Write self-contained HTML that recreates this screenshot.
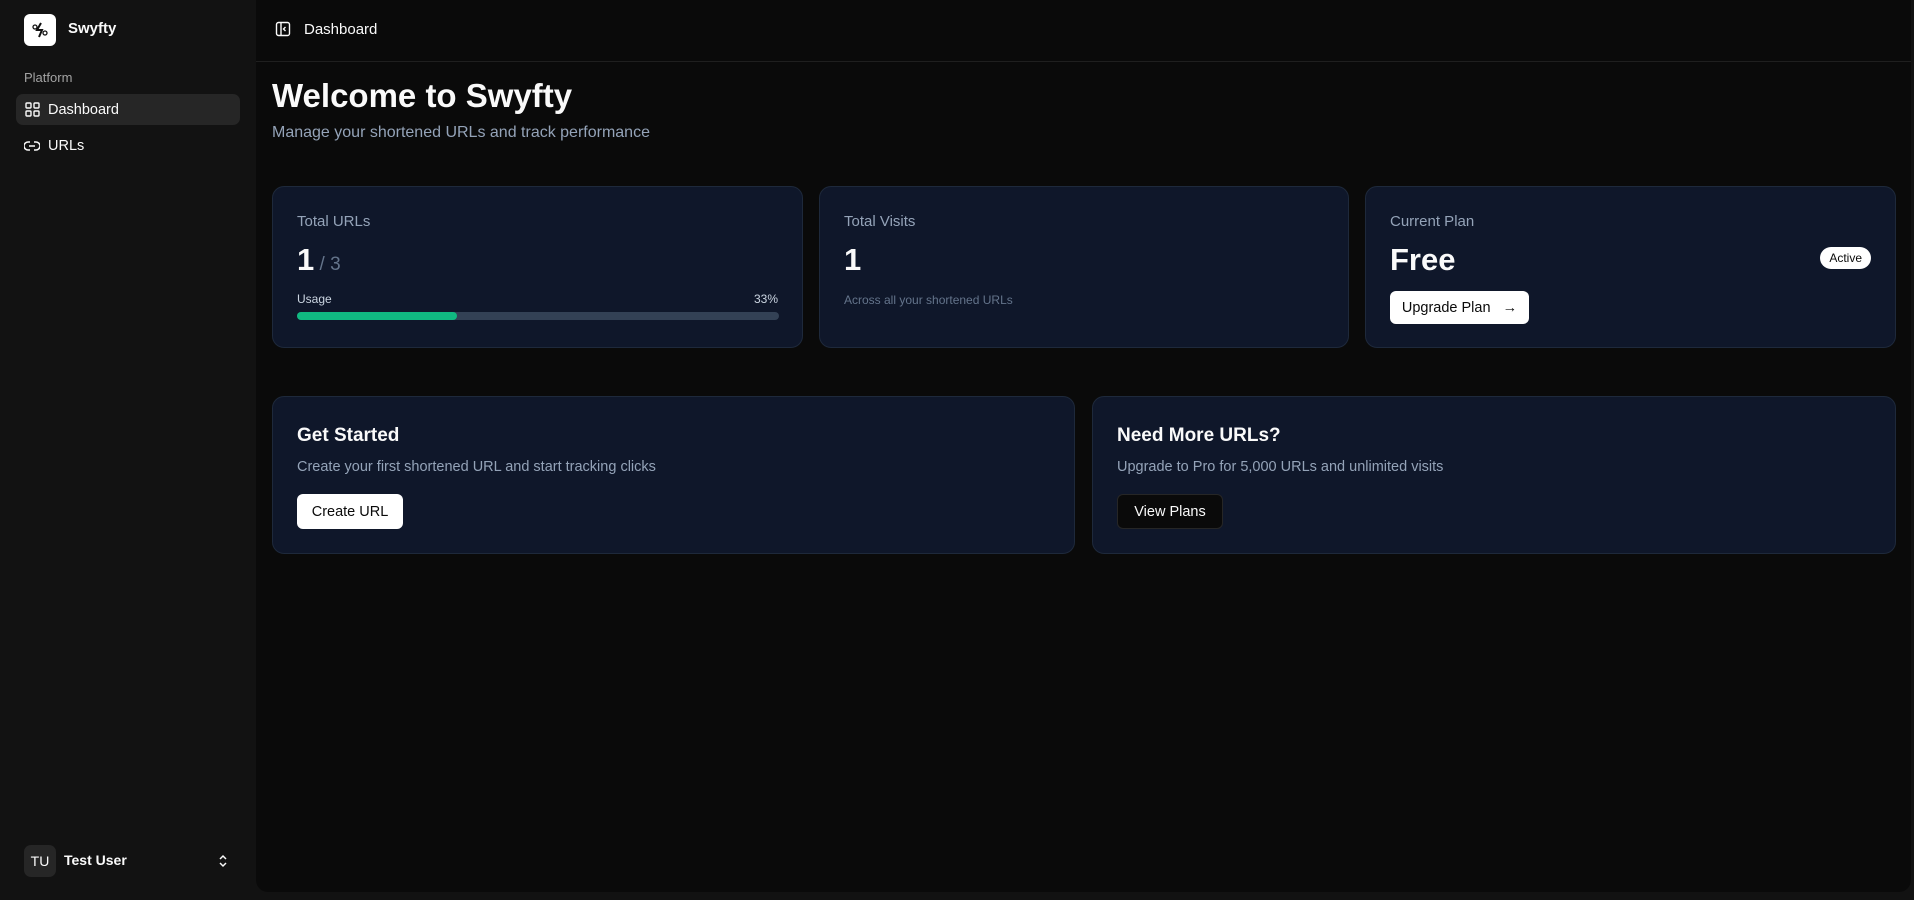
<!DOCTYPE html>
<html><head><meta charset="utf-8"><style>
*{box-sizing:border-box;margin:0;padding:0}
body{width:1914px;height:900px;background:#121212;font-family:"Liberation Sans",sans-serif;color:#fafafa;position:relative;overflow:hidden}
.abs{position:absolute}
.side{left:0;top:0;width:256px;height:900px;background:#121212}
.main{left:256px;top:0;width:1655px;height:892px;background:#0a0a0a;border-radius:0 0 12px 12px}
.card{position:absolute;background:#0f172a;border:1px solid #1e293b;border-radius:12px}
.lbl{color:#94a3b8;font-size:15px}
.btnw{position:absolute;background:#fff;color:#0a0a0a;border-radius:6px;font-size:15px;display:flex;align-items:center;justify-content:center}
</style></head><body>
<div class="abs side">
  <div class="abs" style="left:24px;top:14px;width:32px;height:32px;background:#fff;border-radius:6px">
    <svg width="32" height="32" viewBox="0 0 32 32"><circle cx="11" cy="13" r="2" fill="none" stroke="#111" stroke-width="1.3"/><circle cx="21" cy="19" r="2" fill="none" stroke="#111" stroke-width="1.3"/><path d="M17 9l-4 7h5l-3 7" fill="none" stroke="#111" stroke-width="2"/></svg>
  </div>
  <div class="abs" style="left:68px;top:20px;font-size:15px;font-weight:bold">Swyfty</div>
  <div class="abs" style="left:24px;top:70px;font-size:13px;color:#a3a3a3">Platform</div>
  <div class="abs" style="left:16px;top:94px;width:224px;height:31px;background:#262626;border-radius:7px"></div>
  <svg class="abs" style="left:25px;top:102px" width="15" height="15" viewBox="0 0 15 15" fill="none" stroke="#fafafa" stroke-width="1.4"><rect x="1" y="1" width="5" height="5" rx="1"/><rect x="9" y="1" width="5" height="5" rx="1"/><rect x="1" y="9" width="5" height="5" rx="1"/><rect x="9" y="9" width="5" height="5" rx="1"/></svg>
  <div class="abs" style="left:48px;top:102px;font-size:14.5px">Dashboard</div>
  <svg class="abs" style="left:24px;top:139px" width="16" height="14" viewBox="0 0 16 14" fill="none" stroke="#fafafa" stroke-width="1.5"><path d="M6 3H4a4 4 0 000 8h2M10 3h2a4 4 0 010 8h-2M5 7h6"/></svg>
  <div class="abs" style="left:48px;top:138px;font-size:14.5px">URLs</div>
  <div class="abs" style="left:24px;top:845px;width:32px;height:32px;background:#262626;border-radius:7px;font-size:14px;display:flex;align-items:center;justify-content:center">TU</div>
  <div class="abs" style="left:64px;top:852px;font-size:14px;font-weight:bold">Test User</div>
  <svg class="abs" style="left:218px;top:853px" width="10" height="16" viewBox="0 0 10 16" fill="none" stroke="#fafafa" stroke-width="1.5"><path d="M2 6l3-3 3 3M2 10l3 3 3-3"/></svg>
</div>
<div class="abs main">
  <svg class="abs" style="left:19px;top:21px" width="16" height="16" viewBox="0 0 16 16" fill="none" stroke="#fafafa" stroke-width="1.4"><rect x="1.5" y="1.5" width="13" height="13" rx="2"/><path d="M6 1.5v13M10.5 6l-2 2 2 2"/></svg>
  <div class="abs" style="left:48px;top:21px;font-size:15px">Dashboard</div>
  <div class="abs" style="left:0;top:61px;width:1655px;height:1px;background:#1f1f1f"></div>
  <div class="abs" style="left:16px;top:77px;font-size:33px;font-weight:bold">Welcome to Swyfty</div>
  <div class="abs" style="left:16px;top:124px;font-size:16px;color:#94a3b8">Manage your shortened URLs and track performance</div>

  <div class="card" style="left:16px;top:186px;width:531px;height:162px">
    <div class="abs lbl" style="left:24px;top:26px">Total URLs</div>
    <div class="abs" style="left:24px;top:55px;font-size:31px;font-weight:bold">1<span style="font-size:19px;color:#64748b;font-weight:normal"> / 3</span></div>
    <div class="abs" style="left:24px;top:105px;font-size:12px;color:#cbd5e1">Usage</div>
    <div class="abs" style="right:24px;top:105px;font-size:12px;color:#cbd5e1">33%</div>
    <div class="abs" style="left:24px;top:125px;width:482px;height:8px;border-radius:4px;background:#334155"><div style="width:160px;height:8px;border-radius:4px;background:#10b981"></div></div>
  </div>
  <div class="card" style="left:563px;top:186px;width:530px;height:162px">
    <div class="abs lbl" style="left:24px;top:26px">Total Visits</div>
    <div class="abs" style="left:24px;top:55px;font-size:31px;font-weight:bold">1</div>
    <div class="abs" style="left:24px;top:106px;font-size:12px;color:#64748b">Across all your shortened URLs</div>
  </div>
  <div class="card" style="left:1109px;top:186px;width:531px;height:162px">
    <div class="abs lbl" style="left:24px;top:26px">Current Plan</div>
    <div class="abs" style="left:24px;top:55px;font-size:31px;font-weight:bold">Free</div>
    <div class="abs" style="right:24px;top:60px;height:22px;padding:0 9px;background:#fff;color:#0a0a0a;border-radius:11px;font-size:12px;line-height:22px">Active</div>
    <div class="btnw" style="left:24px;top:104px;width:139px;height:33px;font-size:14.5px">Upgrade Plan&nbsp;&nbsp;&nbsp;→</div>
  </div>

  <div class="card" style="left:16px;top:396px;width:803px;height:158px">
    <div class="abs" style="left:24px;top:28px;font-size:19px;font-weight:bold">Get Started</div>
    <div class="abs lbl" style="left:24px;top:62px;font-size:14.5px">Create your first shortened URL and start tracking clicks</div>
    <div class="btnw" style="left:24px;top:97px;width:106px;height:35px;font-size:14.5px">Create URL</div>
  </div>
  <div class="card" style="left:836px;top:396px;width:804px;height:158px">
    <div class="abs" style="left:24px;top:28px;font-size:19px;font-weight:bold">Need More URLs?</div>
    <div class="abs lbl" style="left:24px;top:62px;font-size:14.5px">Upgrade to Pro for 5,000 URLs and unlimited visits</div>
    <div class="abs" style="left:24px;top:97px;width:106px;height:35px;border:1px solid #262626;background:#0a0a0a;border-radius:6px;font-size:14.5px;display:flex;align-items:center;justify-content:center">View Plans</div>
  </div>
</div>
</body></html>
